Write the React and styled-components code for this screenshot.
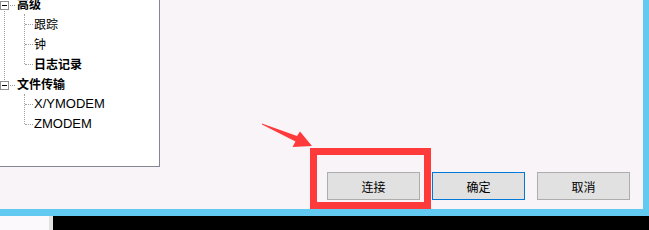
import styled, { createGlobalStyle, css } from "styled-components";

const GlobalStyle = createGlobalStyle`
  html, body {
    margin: 0;
    padding: 0;
    overflow: hidden;
    background: #000;
  }
  * {
    box-sizing: border-box;
  }
`;

const Screen = styled.div`
  width: 649px;
  height: 230px;
  display: flex;
  flex-direction: column;
  font-family: "Noto Sans CJK SC", "Noto Sans", sans-serif;
`;

const Dialog = styled.div`
  height: 216px;
  display: flex;
  flex-direction: column;
  background: #f8f4f8;
  border-right: 6px solid #62caf0;
  border-bottom: 7px solid #62caf0;
`;

const TreePanel = styled.div`
  width: 160px;
  height: 167px;
  flex-shrink: 0;
  background: #fff;
  border-right: 1px solid #838795;
  border-bottom: 1px solid #838795;
  overflow: hidden;
`;

const TreeList = styled.div`
  margin-top: -6px;
`;

const dotted = css`
  content: "";
  position: absolute;
  border-color: #a0a0a0;
  border-style: dotted;
  border-width: 0;
`;

const Group = styled.div`
  position: relative;

  ${(p) =>
    !p.$last &&
    css`
      &::before {
        ${dotted};
        left: 4px;
        top: 10px;
        bottom: -10px;
        border-left-width: 1px;
      }
    `}
`;

const TopRow = styled.div`
  position: relative;
  height: 20px;
  display: flex;
  align-items: center;
`;

const Expander = styled.span`
  position: relative;
  z-index: 1;
  width: 9px;
  height: 9px;
  margin-top: 3px;
  border: 1px solid #919191;
  background: #fff;
  flex-shrink: 0;

  &::after {
    content: "";
    position: absolute;
    left: 1px;
    top: 3px;
    width: 5px;
    height: 1px;
    background: #000;
  }
`;

const Connector = styled.span`
  width: 5px;
  margin: 3px 2px 0 1px;
  border-top: 1px dotted #a0a0a0;
`;

const Children = styled.div`
  position: relative;

  &::before {
    ${dotted};
    left: 24px;
    top: 0;
    bottom: 10px;
    border-left-width: 1px;
  }
`;

const ChildRow = styled.div`
  position: relative;
  height: 20px;
  display: flex;
  align-items: center;
  padding-left: 34px;

  &::before {
    ${dotted};
    left: 25px;
    top: 10px;
    width: 8px;
    border-top-width: 1px;
  }
`;

const Label = styled.span`
  font-size: 12px;
  line-height: 20px;
  color: #000;
  white-space: nowrap;
  font-weight: ${(p) => (p.$bold ? 700 : 400)};

  ${(p) =>
    p.$latin &&
    css`
      font-family: "Liberation Sans", "Noto Sans CJK SC", sans-serif;
      font-size: 13px;
    `}
`;

const ButtonRow = styled.div`
  margin-top: auto;
  display: flex;
  justify-content: flex-end;
  gap: 12px;
  padding: 0 13px 9px 0;
`;

const ButtonSlot = styled.div`
  position: relative;
  display: flex;
`;

const Button = styled.button`
  width: 93px;
  height: 28px;
  padding: 0;
  background: #e1e1e1;
  border: 1px solid ${(p) => (p.$default ? "#0078d7" : "#adadad")};
  font-family: "Noto Sans CJK SC", sans-serif;
  font-size: 12px;
  color: #000;
  position: relative;
  z-index: 1;
`;

const Highlight = styled.span`
  position: absolute;
  left: -17px;
  top: -24px;
  right: -11px;
  bottom: -9px;
  border: 7px solid #ff3a3a;
  pointer-events: none;
`;

const Arrow = styled.svg`
  position: absolute;
  left: -68px;
  top: -52px;
  width: 56px;
  height: 30px;
  overflow: visible;
`;

const Taskbar = styled.div`
  flex: 1;
  display: flex;
  background: #000;
`;

const TaskStub = styled.div`
  width: 53px;
  background: #fbf9fb;
  border-right: 4px solid #e2e2e2;
`;

const tree = [
  { label: "高级", items: [{ label: "跟踪" }, { label: "钟" }, { label: "日志记录", bold: true }] },
  { label: "文件传输", items: [{ label: "X/YMODEM", latin: true }, { label: "ZMODEM", latin: true }] },
];

const App = () => {
  return (
    <Screen>
      <GlobalStyle />
      <Dialog>
        <TreePanel>
          <TreeList>
            {tree.map((group, i) => (
              <Group key={group.label} $last={i === tree.length - 1}>
                <TopRow>
                  <Expander />
                  <Connector />
                  <Label $bold>{group.label}</Label>
                </TopRow>
                <Children>
                  {group.items.map((item) => (
                    <ChildRow key={item.label}>
                      <Label $bold={item.bold} $latin={item.latin}>
                        {item.label}
                      </Label>
                    </ChildRow>
                  ))}
                </Children>
              </Group>
            ))}
          </TreeList>
        </TreePanel>

        <ButtonRow>
          <ButtonSlot>
            <Arrow viewBox="259 120 56 30">
              <polygon
                points="262,123.5 297,136 300,131.5 312,146 292.5,147 295.5,141.5 262,124.5"
                fill="#ff3a3a"
              />
            </Arrow>
            <Highlight />
            <Button>连接</Button>
          </ButtonSlot>
          <ButtonSlot>
            <Button $default>确定</Button>
          </ButtonSlot>
          <ButtonSlot>
            <Button>取消</Button>
          </ButtonSlot>
        </ButtonRow>
      </Dialog>
      <Taskbar>
        <TaskStub />
      </Taskbar>
    </Screen>
  );
};

export default App;
